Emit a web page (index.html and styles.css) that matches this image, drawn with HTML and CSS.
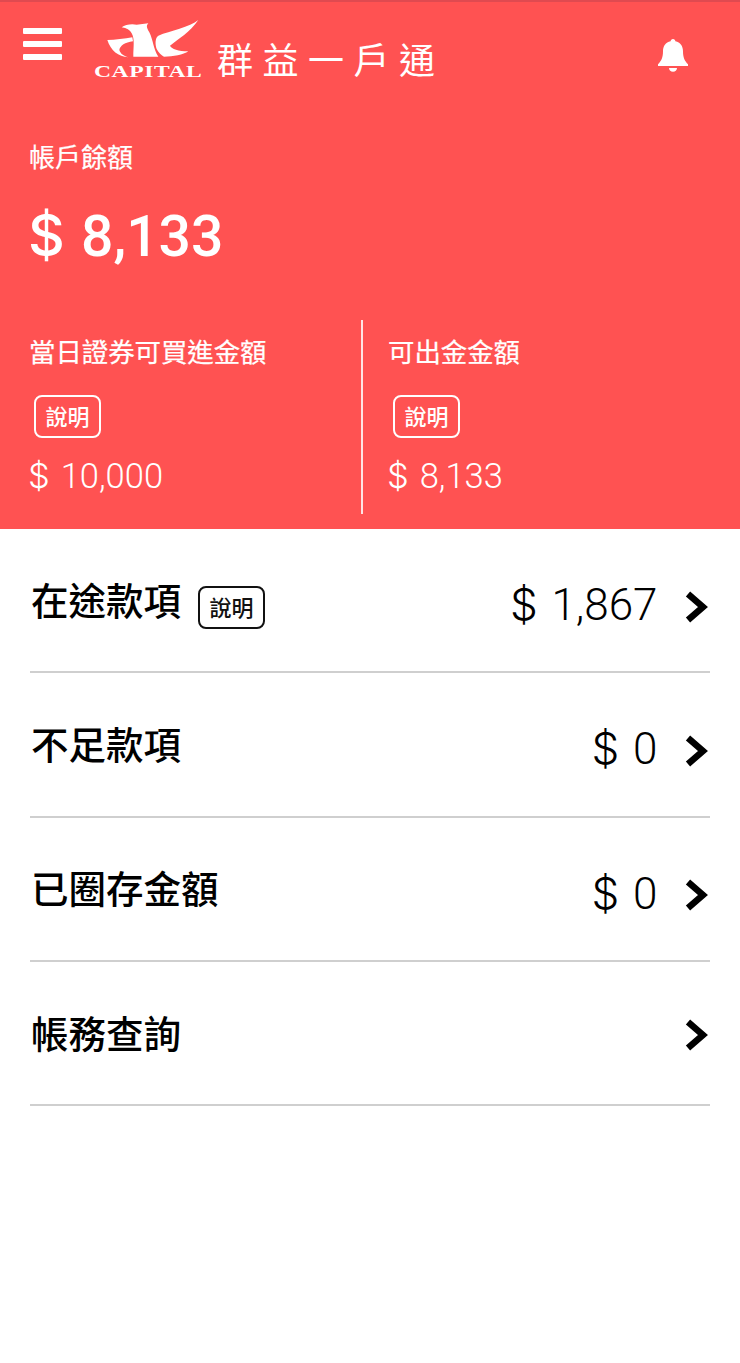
FILE: index.html
```html
<!DOCTYPE html>
<html lang="zh-Hant">
<head>
<meta charset="utf-8">
<title>群益一戶通</title>
<link rel="stylesheet" href="styles.css">
</head>
<body>
<section class="hero">
  <header class="topbar">
    <div class="menu" aria-label="menu"><span></span><span></span><span></span></div>
    <div class="logo">
      <div class="mark">
        <svg class="bird" width="120" height="50" viewBox="0 0 360 150">
          <path fill="#fff" d="M325 18C300 40 240 50 205 65C195 72 195 90 200 105C205 115 215 125 222 128C250 128 280 122 295 112C265 112 245 105 240 95C265 75 300 55 325 18Z"/>
          <path fill="#fff" d="M95 40C105 32 125 28 140 32L175 28C168 35 170 42 178 55C190 80 190 105 205 128L130 128C130 100 135 75 125 58C120 48 110 42 95 40Z"/>
          <path fill="#fff" d="M52 78C75 78 105 74 127 70L129 82C105 85 90 95 88 108C92 120 100 125 115 130C85 128 62 110 52 78Z"/>
        </svg>
        <span class="capital">CAPITAL</span>
      </div>
      <span class="brand">群益一戶通</span>
    </div>
    <svg class="bell" width="32" height="34" viewBox="0 0 32 34">
      <path fill="#fff" d="M16 1c1.400 0 2.400 1 2.400 2.300 5 1 7.600 4.800 7.600 10 0 6 1.500 9.500 5 13v1.700H1v-1.700c3.500-3.500 5-7 5-13 0-5.200 2.600-9 7.600-10C13.600 2 14.600 1 16 1z"/>
      <path fill="#fff" d="M12 30h8c0 2.300-1.800 3.800-4 3.800s-4-1.500-4-3.800z"/>
    </svg>
  </header>
  <div class="balance">
    <div class="balance-label">帳戶餘額</div>
    <div class="balance-value"><span class="cur">$</span> 8,133</div>
  </div>
  <div class="split">
    <div class="col col-left">
      <div class="col-title">當日證券可買進金額</div>
      <span class="tag">說明</span>
      <div class="col-value"><span class="cur">$</span> 10,000</div>
    </div>
    <div class="col col-right">
      <div class="col-title">可出金金額</div>
      <span class="tag">說明</span>
      <div class="col-value"><span class="cur">$</span> 8,133</div>
    </div>
  </div>
</section>
<main class="list">
  <div class="row">
    <div class="row-name"><span>在途款項</span><span class="tag tag-dark">說明</span></div>
    <div class="row-end"><span class="amount"><span class="cur">$</span> 1,867</span><svg class="chev" width="24" height="32" viewBox="0 0 24 32"><path d="M3 3 18 16 3 29" fill="none" stroke="#000" stroke-width="6.500"/></svg></div>
  </div>
  <div class="row">
    <div class="row-name"><span>不足款項</span></div>
    <div class="row-end"><span class="amount"><span class="cur">$</span> 0</span><svg class="chev" width="24" height="32" viewBox="0 0 24 32"><path d="M3 3 18 16 3 29" fill="none" stroke="#000" stroke-width="6.500"/></svg></div>
  </div>
  <div class="row">
    <div class="row-name"><span>已圈存金額</span></div>
    <div class="row-end"><span class="amount"><span class="cur">$</span> 0</span><svg class="chev" width="24" height="32" viewBox="0 0 24 32"><path d="M3 3 18 16 3 29" fill="none" stroke="#000" stroke-width="6.500"/></svg></div>
  </div>
  <div class="row">
    <div class="row-name"><span>帳務查詢</span></div>
    <div class="row-end row-end-plain"><svg class="chev" width="24" height="32" viewBox="0 0 24 32"><path d="M3 3 18 16 3 29" fill="none" stroke="#000" stroke-width="6.500"/></svg></div>
  </div>
</main>
</body>
</html>
```
FILE: styles.css
```css
* { box-sizing: border-box; }
html, body { margin: 0; padding: 0; }
body {
  width: 740px;
  height: 1363px;
  overflow: hidden;
  background: #fff;
  color: #000;
  font-family: Roboto, "Noto Sans CJK TC", sans-serif;
}
.cur { font-family: Inter, sans-serif; }
.hero {
  height: 529px;
  background: #ff5252;
  border-top: 2px solid #e04a50;
  color: #fff;
  display: flex;
  flex-direction: column;
}
.topbar {
  height: 88px;
  display: flex;
  align-items: flex-start;
  padding-left: 23px;
}
.menu {
  width: 39px;
  margin-top: 26px;
  display: flex;
  flex-direction: column;
  gap: 7px;
}
.menu span {
  height: 6px;
  background: #fff;
  border-radius: 1px;
}
.logo {
  display: flex;
  align-items: flex-end;
  margin-left: 28px;
  margin-top: 12px;
}
.mark {
  width: 120px;
  display: flex;
  flex-direction: column;
}
.bird { display: block; }
.capital {
  font-family: "Liberation Serif", serif;
  font-size: 17.500px;
  font-weight: 700;
  line-height: 14px;
  letter-spacing: 0.4px;
  white-space: nowrap;
  margin-left: 4px;
  transform: scaleX(1.35);
  transform-origin: left center;
}
.brand {
  font-family: "Noto Sans CJK TC", sans-serif;
  font-weight: 400;
  font-size: 36px;
  line-height: 40px;
  letter-spacing: 9.500px;
  margin-left: 7px;
  white-space: nowrap;
}
.bell {
  margin-left: auto;
  margin-right: 51px;
  margin-top: 36px;
}
.balance {
  padding-left: 29px;
  height: 230px;
}
.balance-label {
  font-family: "Noto Sans CJK TC", sans-serif;
  font-size: 26px;
  line-height: 38px;
  font-weight: 400;
  -webkit-text-stroke: 0.25px #fff;
  margin-top: 47px;
}
.balance-value {
  font-size: 57px;
  line-height: 66px;
  font-weight: 500;
  margin-top: 28px;
  margin-left: -1px;
  word-spacing: 2px;
}
.split {
  display: flex;
  height: 194px;
}
.col { display: flex; flex-direction: column; align-items: flex-start; }
.col-left {
  width: 363px;
  padding-left: 29px;
  border-right: 2px solid #ffe4e4;
}
.col-right { padding-left: 25px; }
.col-title {
  font-family: "Noto Sans CJK TC", sans-serif;
  font-size: 26.400px;
  line-height: 38px;
  font-weight: 400;
  -webkit-text-stroke: 0.25px #fff;
  margin-top: 12px;
}
.tag {
  font-family: "Noto Sans CJK TC", sans-serif;
  width: 67px;
  height: 43px;
  border: 2px solid #fff;
  border-radius: 8px;
  font-size: 22px;
  font-weight: 500;
  line-height: 36px;
  text-align: center;
  margin: 25px 0 0 5px;
}
.col-value {
  font-size: 34.500px;
  font-weight: 300;
  line-height: 40px;
  margin-top: 18px;
  margin-left: -1px;
  word-spacing: 2.500px;
}
.list {
  padding: 0 30px;
}
.row {
  height: 144.300px;
  border-bottom: 2px solid #cfcfcf;
  display: flex;
  justify-content: space-between;
  align-items: center;
}
.row-name {
  font-family: "Noto Sans CJK TC", sans-serif;
  font-size: 37.500px;
  font-weight: 500;
  line-height: 50px;
  display: flex;
  align-items: center;
  margin-top: -3px;
  padding-left: 1px;
}
.tag-dark {
  border-color: #111;
  color: #111;
  margin: 18px 0 0 17px;
}
.row-end {
  display: flex;
  align-items: center;
  margin-top: 9px;
}
.row-end-plain { margin-top: 0; }
.amount {
  font-size: 44px;
  font-weight: 300;
  line-height: 56px;
  margin-right: 27px;
  word-spacing: 3px;
}
.chev {
  display: block;
  margin-top: 4px;
  margin-right: 1.500px;
}
```
